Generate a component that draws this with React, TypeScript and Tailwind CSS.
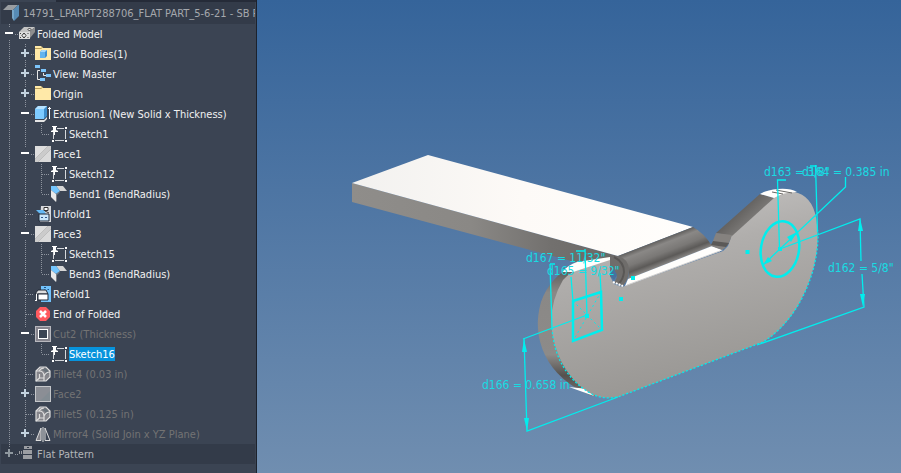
import { useState } from "react";
import type { ReactNode } from "react";

type Guide = "line" | "tee" | "end" | "plus" | "minus" | "plusEnd";

type IconName =
  | "folded"
  | "bodies"
  | "view"
  | "folder"
  | "extrusion"
  | "sketch"
  | "face"
  | "bend"
  | "unfold"
  | "refold"
  | "stop"
  | "cut"
  | "fillet"
  | "faceOff"
  | "mirror"
  | "flat";

interface TreeNode {
  label: string;
  icon: IconName;
  guides: Guide[];
  tone?: "normal" | "muted" | "inactive";
}

const nodes: TreeNode[] = [
  { label: "Folded Model", icon: "folded", guides: ["minus"] },
  { label: "Solid Bodies(1)", icon: "bodies", guides: ["line", "plus"] },
  { label: "View: Master", icon: "view", guides: ["line", "plus"] },
  { label: "Origin", icon: "folder", guides: ["line", "plus"] },
  { label: "Extrusion1 (New Solid x Thickness)", icon: "extrusion", guides: ["line", "minus"] },
  { label: "Sketch1", icon: "sketch", guides: ["line", "line", "end"] },
  { label: "Face1", icon: "face", guides: ["line", "minus"] },
  { label: "Sketch12", icon: "sketch", guides: ["line", "line", "tee"] },
  { label: "Bend1 (BendRadius)", icon: "bend", guides: ["line", "line", "end"] },
  { label: "Unfold1", icon: "unfold", guides: ["line", "tee"] },
  { label: "Face3", icon: "face", guides: ["line", "minus"] },
  { label: "Sketch15", icon: "sketch", guides: ["line", "line", "tee"] },
  { label: "Bend3 (BendRadius)", icon: "bend", guides: ["line", "line", "end"] },
  { label: "Refold1", icon: "refold", guides: ["line", "tee"] },
  { label: "End of Folded", icon: "stop", guides: ["line", "tee"] },
  { label: "Cut2 (Thickness)", icon: "cut", guides: ["line", "minus"], tone: "muted" },
  { label: "Sketch16", icon: "sketch", guides: ["line", "line", "end"] },
  { label: "Fillet4 (0.03 in)", icon: "fillet", guides: ["line", "tee"], tone: "muted" },
  { label: "Face2", icon: "faceOff", guides: ["line", "plus"], tone: "muted" },
  { label: "Fillet5 (0.125 in)", icon: "fillet", guides: ["line", "tee"], tone: "muted" },
  { label: "Mirror4 (Solid Join x YZ Plane)", icon: "mirror", guides: ["line", "plusEnd"], tone: "muted" },
  { label: "Flat Pattern", icon: "flat", guides: ["plusEnd"], tone: "inactive" },
];

const icons: Record<IconName, ReactNode> = {
  folded: (
    <>
      <path d="M0 6L5 1H16L11 6Z" fill="#c4c4c4" />
      <path d="M11 6L16 1V6L11 12Z" fill="#8e8e8e" />
      <path d="M0 6H11V13H0Z" fill="#dcdcdc" />
      <path d="M5 7L7 9.500L5 12L3 9.500Z" fill="#eee" stroke="#333" />
      <path d="M10.500 2L12 3.500L10.500 5L9 3.500Z" fill="#eee" stroke="#333" />
      <path d="M1 7.500H2M1 11.500H2M8.500 7.500H9.500M8.500 11.500H9.500" stroke="#444" />
    </>
  ),
  bodies: (
    <>
      <path d="M0 0H6L8 2H16V14H0Z" fill="#ffe9a8" />
      <path d="M0 2.500H6L8 1" fill="none" stroke="#b79e5a" />
      <path d="M5 6L7 4H12V10L10 12H5Z" fill="#3f8fd0" />
      <path d="M5 6H10V12H5Z" fill="#62b4ee" />
      <path d="M5 6L7 4H12L10 6Z" fill="#a4d8fb" />
    </>
  ),
  view: (
    <>
      <path d="M5 4.500H2.500V13.500H5M8.500 7V9.500H11" fill="none" stroke="#e8e8e8" />
      <path d="M0 -1H5V2H0ZM6 3H11V6H6ZM11 8H16V11H11ZM5 12H10V15H5Z" fill="#7cc4fa" />
    </>
  ),
  folder: (
    <>
      <path d="M0 0H6L8 2H16V14H0Z" fill="#ffe9a8" />
      <path d="M0 2.500H6L8 1" fill="none" stroke="#b79e5a" />
    </>
  ),
  extrusion: (
    <>
      <path d="M0 14H9L12 11V13L9 16H0Z" fill="#e6e6e6" />
      <path d="M0 3L3 0H12V10L9 13H0Z" fill="#3d8dcb" />
      <path d="M0 3H9V13H0Z" fill="#7ecbff" />
      <path d="M0 3L3 0H12L9 3Z" fill="#b5e2ff" />
      <path d="M14.500 1V13M13 2.500H16" stroke="#fff" />
    </>
  ),
  sketch: (
    <>
      <path d="M6 2.500H13M14.500 4V13M4 14.500H13M2.500 13V6" fill="none" stroke="#d5d8dc" />
      <path d="M14 1H16V3H14ZM1 14H3V16H1ZM14 14H16V16H14Z" fill="#fff" />
      <path d="M1 0H6V1H5V4L7 5V6H0V5L2 4V1H1Z" fill="#fff" />
      <path d="M3.500 6V9" stroke="#fff" />
    </>
  ),
  face: (
    <>
      <rect width="16" height="16" fill="#cbcbcb" />
      <path d="M0 0H13L0 13Z" fill="#dedede" />
      <path d="M16 3V16H3Z" fill="#dadada" />
      <path d="M0 13L13 0M3 16L16 3" stroke="#b5b5b5" strokeWidth="0.700" />
    </>
  ),
  bend: (
    <>
      <path d="M5 0H12L16 5H9Z" fill="#d5d5d5" />
      <path d="M0 0H5L9 5L5 8L0 4Z" fill="#74c6ff" />
      <path d="M0 4L5 8V16L0 11Z" fill="#e9e9e9" />
      <path d="M5 8L9 5V6L6 9V15L5 16Z" fill="#777b83" />
    </>
  ),
  unfold: (
    <>
      <path d="M6 0H16V16H5Z" fill="#d7d9dc" />
      <path d="M1 4H9L11 8H5Z" fill="#65b9f4" />
      <path d="M9 1.500H13V4.500H9ZM10 5L14 7" fill="#fff" stroke="#333" />
      <path d="M4 8H14V15H4Z" fill="#c7e6fb" stroke="#222b38" />
      <path d="M6 11.500H8M10 11.500H12" stroke="#30588a" />
    </>
  ),
  refold: (
    <>
      <path d="M6 0H16V16H6Z" fill="#72c2fb" />
      <path d="M9 1.500H11M12.500 3.500H14M9 4H10" stroke="#1d5485" />
      <path d="M0 8L3 4H11L13 8Z" fill="#dedede" stroke="#222b38" />
      <path d="M3 8H13V14H3Z" fill="#fff" stroke="#222b38" />
      <path d="M0 14.500H2M1.500 8V15" stroke="#fff" />
    </>
  ),
  stop: (
    <>
      <path d="M5 1H11L15 5V11L11 15H5L1 11V5Z" fill="#ff5a5f" />
      <path d="M5 5L11 11M11 5L5 11" stroke="#fff" strokeWidth="2.500" />
    </>
  ),
  cut: (
    <>
      <rect x="0.500" y="0.500" width="15" height="15" fill="#85848d" stroke="#b8b8be" />
      <rect x="3.500" y="3.500" width="9" height="9" fill="#3b4453" stroke="#fff" />
    </>
  ),
  fillet: (
    <>
      <path d="M1 5L5 1H11L15 5V11L11 15H1Z" fill="#85858b" stroke="#dedede" strokeWidth="1.200" />
      <path d="M7 4Q11 5 11 9L14 7Q13 3 10 2Z" fill="#69727a" />
      <path d="M1 5H4Q9 5 9 10V15M4 5Q6 2 9 2M9 10Q11 6 15 6M4.500 8V12H9M4.500 12L1 15" fill="none" stroke="#dedede" strokeWidth="1.200" />
    </>
  ),
  faceOff: (
    <>
      <rect x="0.500" y="0.500" width="15" height="15" fill="#8b8e95" stroke="#c5c7ca" />
      <path d="M15 5V15H5Z" fill="#838c93" />
    </>
  ),
  mirror: (
    <>
      <path d="M6 2V14.500H1Z" fill="#808087" stroke="#dedede" />
      <path d="M10 2V14.500H15Z" fill="#3b4453" stroke="#dedede" />
      <path d="M8 1V16" stroke="#dedede" />
    </>
  ),
  flat: (
    <>
      <path d="M5 0H13V3H5ZM4 4H13V8H4ZM4 9H13V13H4Z" fill="#9b9da2" />
      <path d="M0 5H1V8H0ZM2 5H3V8H2Z" fill="#9b9da2" />
      <path d="M8 1.500H10" stroke="#333c49" />
    </>
  ),
};

function GuideCell({ kind, dim }: { kind: Guide; dim: boolean }) {
  const sign = kind === "plus" || kind === "minus" || kind === "plusEnd";
  const paths: Record<Guide, string> = {
    line: "M8.500 0V20",
    tee: "M8.500 0V20M9 10.500H17",
    end: "M8.500 0V10M9 10.500H17",
    plus: "M8.500 0V4M8.500 16V20M14 10.500H17",
    minus: "M8.500 0V4M8.500 16V20M14 10.500H17",
    plusEnd: "M8.500 0V4M14 10.500H17",
  };
  const signColor = dim ? "#8f989f" : kind === "minus" ? "#fff" : "#c3d2df";
  return (
    <svg className="h-5 w-4 shrink-0 overflow-visible" viewBox="0 0 16 20" shapeRendering="crispEdges" aria-hidden="true">
      <path d={paths[kind]} stroke="#8e949e" strokeDasharray="1 1" fill="none" />
      {sign && <path d="M4 8H12V10H4Z" fill={signColor} />}
      {(kind === "plus" || kind === "plusEnd") && <path d="M7 5H9V13H7Z" fill={signColor} />}
    </svg>
  );
}

function ModelBrowser() {
  const [selected, setSelected] = useState("Sketch16");

  const getTextColor = (node: TreeNode) => {
    if (node.label === selected) return "bg-[#0793dc] text-white";
    if (node.tone === "muted") return "text-[#737373]";
    if (node.tone === "inactive") return "text-[#b4b6b9]";
    return "text-[#f1f1f1]";
  };

  return (
    <aside className="flex w-[257px] shrink-0 flex-col overflow-hidden border-r border-[#1c222c] bg-[#3b4453] text-[11px]">
      <div className="ml-14 h-0.5 shrink-0 bg-[#252b38]" />
      {/* Document title */}
      <header className="mx-px flex h-[22px] shrink-0 items-center gap-1 bg-[#333b49] pl-0.5 text-[#a5a8ad]">
        <svg className="h-4 w-4 shrink-0" viewBox="0 0 16 16" aria-hidden="true">
          <path d="M0 5L5 0H15L10 5Z" fill="#999da1" />
          <path d="M10 5L15 0H16V11L11 16Z" fill="#568bb5" />
          <path d="M9 5H11V16L9 13Z" fill="#77a6c8" />
        </svg>
        <h1 className="overflow-hidden whitespace-nowrap pt-0.5">14791_LPARPT288706_FLAT PART_5-6-21 - SB P</h1>
      </header>

      <ul>
        {nodes.map((node) => (
          <li key={node.label} className={node.tone === "inactive" ? "mx-px bg-[#333b49]" : "mx-px"}>
            <button type="button" onClick={() => setSelected(node.label)} className="flex h-5 w-full items-center text-left">
              {node.guides.map((kind, i) => (
                <GuideCell key={i} kind={kind} dim={node.tone === "inactive"} />
              ))}
              <svg className="ml-0.5 h-4 w-4 shrink-0 overflow-visible" viewBox="0 0 16 16" aria-hidden="true">
                {icons[node.icon]}
              </svg>
              <span className={`ml-0.5 whitespace-nowrap pt-px leading-[13px] ${getTextColor(node)}`}>{node.label}</span>
            </button>
          </li>
        ))}
      </ul>
    </aside>
  );
}

const dimensions = [
  { x: 764, y: 176, text: 'd163 = 3/8"' },
  { x: 802, y: 176, text: "d164 = 0.385 in" },
  { x: 828, y: 272, text: 'd162 = 5/8"' },
  { x: 526, y: 262, text: 'd167 = 11/32"' },
  { x: 547, y: 275, text: 'd165 = 9/32"' },
  { x: 482, y: 389, text: "d166 = 0.658 in" },
];

function PartView() {
  return (
    <main className="min-w-0 flex-1 bg-linear-to-b from-[#35649a] to-[#708eb0]">
      <svg className="h-full w-full" viewBox="257 0 644 473" preserveAspectRatio="xMinYMin meet" role="img" aria-label="Sheet metal part">
        <defs>
          <linearGradient id="plate" x1="0" y1="0" x2="0.300" y2="1">
            <stop offset="0" stopColor="#cbc9c8" />
            <stop offset="0.400" stopColor="#b0aeac" />
            <stop offset="1" stopColor="#999794" />
          </linearGradient>
          <linearGradient id="top" x1="0" y1="0" x2="1" y2="0">
            <stop offset="0" stopColor="#f2f1ef" />
            <stop offset="0.500" stopColor="#fdfaf7" />
            <stop offset="1" stopColor="#fffefc" />
          </linearGradient>
          <linearGradient id="side" x1="0" y1="0" x2="1" y2="0">
            <stop offset="0" stopColor="#8f8d8a" />
            <stop offset="0.450" stopColor="#8a8885" />
            <stop offset="0.750" stopColor="#72706e" />
            <stop offset="1" stopColor="#6a6866" />
          </linearGradient>
          <linearGradient id="bend" gradientUnits="userSpaceOnUse" x1="655" y1="241" x2="665" y2="267">
            <stop offset="0" stopColor="#5c5a58" />
            <stop offset="0.200" stopColor="#8a8886" />
            <stop offset="0.500" stopColor="#7a7876" />
            <stop offset="0.720" stopColor="#5c5a58" />
            <stop offset="0.900" stopColor="#858381" />
          </linearGradient>
          <linearGradient id="rim" x1="0" y1="0" x2="0" y2="1">
            <stop offset="0" stopColor="#656361" />
            <stop offset="0.120" stopColor="#666462" />
            <stop offset="0.250" stopColor="#8a8886" />
            <stop offset="0.700" stopColor="#8d8b89" />
            <stop offset="0.850" stopColor="#55524f" />
            <stop offset="1" stopColor="#75726f" />
          </linearGradient>
          <linearGradient id="chamfer" gradientUnits="userSpaceOnUse" x1="735" y1="210" x2="748" y2="224">
            <stop offset="0" stopColor="#5e5c5a" />
            <stop offset="1" stopColor="#7b7977" />
          </linearGradient>
        </defs>

        {/* Flat bar */}
        <path d="M352 183L618 256L612 272L352 202Z" fill="url(#side)" />
        <path d="M352 183L428 155L693 227L618 256Z" fill="url(#top)" />

        {/* Plate thickness on the left */}
        <path d="M610 258L577 263Q550 276 541 302Q533 330 545 355Q558 382 592 396L600 396L612 300Z" fill="url(#rim)" />
        <path d="M562 272Q568 265 577 262L610 257V262L577 272Z" fill="#fffefc" />
        <path d="M569 387L594 396L588 389Z" fill="#fff" />

        {/* Plate face */}
        <path
          d="M773 198L779 194Q790 190 798 193Q815 199 817 225Q821 262 800 302Q785 329 763 342L618 397Q600 400 588 392Q561 374 553 337Q547 307 563 280Q570 272 579 270L610 260V276L614 284L622 287L723 251L728 246L732 234Z"
          fill="url(#plate)"
        />

        {/* Bend and relief */}
        <path d="M618 256L693 227Q704 233 712 246L628 279Q632 265 618 256Z" fill="url(#bend)" />
        <path d="M610 257L618 256Q629 259 629 270Q629 279 623 286L614 283L617 277L614 270L610 273Z" fill="#6f6d6b" />
        <path d="M614 257Q624 262 624 272Q623 280 619 283" fill="none" stroke="#595755" strokeWidth="2" />
        <path d="M610 272L614 269L617 275L614 280L611 277Z" fill="#47719f" />
        <path d="M628 279L712 246L723 250L625 286Z" fill="#fffefc" />
        <path d="M627 285L720 251" stroke="#d2d0ce" />
        <path d="M613 282L623 286" stroke="#fff" strokeWidth="2" strokeDasharray="2 1" />

        {/* Right arm */}
        <path d="M760 194L774 198L732 236L716 233Z" fill="url(#chamfer)" />
        <path d="M716 233L732 235Q729 246 722 250L711 246Z" fill="#85827f" />
        <path d="M713 241L729 243L726 247L711 245Z" fill="#5b5957" />
        <path d="M760 194Q766 190 778 189Q790 188 797 192Q783 192 774 198Z" fill="#fffefc" />
        <path d="M776 190L792 193M772 192L783 194" stroke="#686664" />

        {/* Projected edges */}
        <g fill="none" stroke="#00eeee">
          <path d="M552 328Q555 372 590 393Q602 400 618 397L763 342Q785 328 800 302Q819 267 818 230" strokeWidth="1.300" strokeDasharray="2 2" />

          {/* Hole and rectangular cut */}
          <ellipse cx="780" cy="249" rx="19" ry="28" transform="rotate(10 780 249)" strokeWidth="2.500" />
          <path d="M573 301L601 292L602 330L573 341Z" strokeWidth="2.500" />
          <path d="M573 301L602 330M601 292L573 341" strokeDasharray="2 3" />

          {/* Dimension lines */}
          <path d="M550 264L552 328M550 264H555M571 277L573 301M576 251H585M585 249L587 316M600 273L601 292" strokeWidth="1.300" />
          <path d="M587 315L523 339M524 339L527 431L618 397" strokeWidth="1.300" />
          <path d="M786 180H777.500L779.500 249M810 166H817M815.500 165L817.500 232M845.500 177V187L763 265" strokeWidth="1.300" />
          <path d="M780 249L860 219L861 261M862 274L864 307L757 345" strokeWidth="1.300" />
        </g>
        <g fill="#00eeee">
          <path d="M860 218L858 231H863ZM863 307L860 294H865ZM524 339L522 352H527ZM527 431L524 418H529Z" />
          <path d="M797 232L787 237L791 242ZM763 265L768 257L772 261Z" />
          <path d="M745.500 250H749.500V254H745.500ZM631 276H635V280H631ZM619 297H623V301H619ZM778 247H782V251H778ZM585 314H589V318H585Z" />
        </g>
        <g fill="#19dbe2" fontSize="12">
          {dimensions.map((d) => (
            <text key={d.text} x={d.x} y={d.y}>
              {d.text}
            </text>
          ))}
        </g>
      </svg>
    </main>
  );
}

export default function App() {
  return (
    <div className="flex h-screen min-h-[466px] w-full overflow-hidden font-['DejaVu_Sans_Condensed','DejaVu_Sans',sans-serif]">
      <ModelBrowser />
      <PartView />
    </div>
  );
}
